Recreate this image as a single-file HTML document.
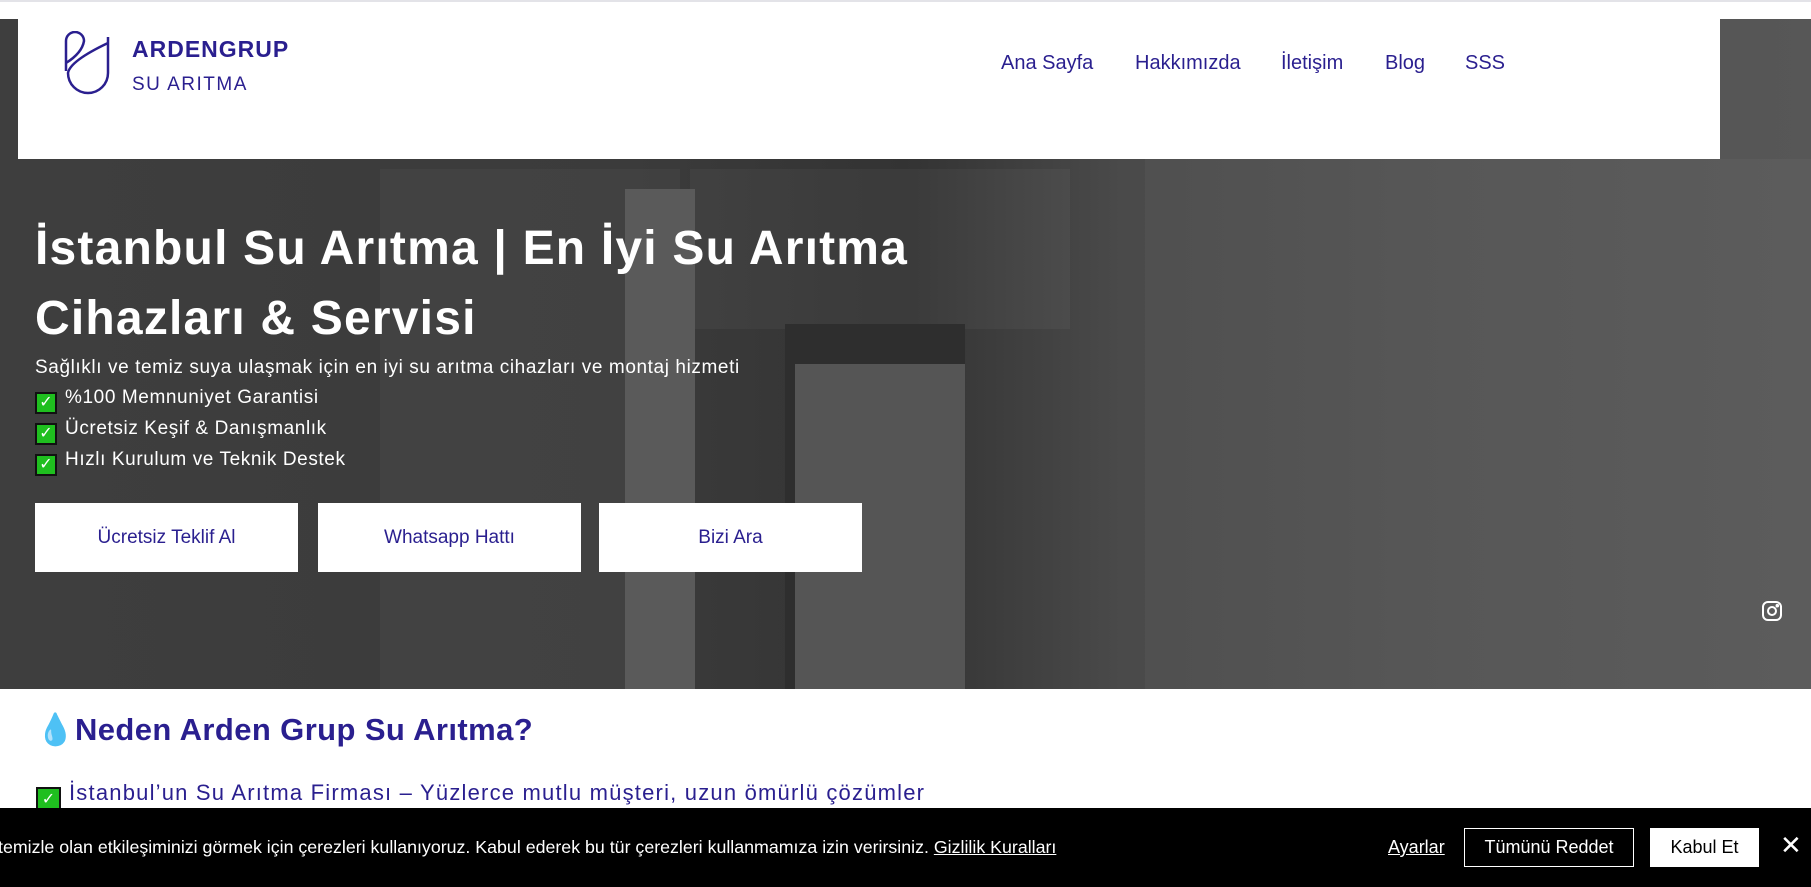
<!DOCTYPE html>
<html><head><meta charset="utf-8"><style>
*{margin:0;padding:0;box-sizing:border-box}
body{width:1811px;height:887px;overflow:hidden;background:#fff;font-family:"Liberation Sans",sans-serif;position:relative}
.top{position:absolute;left:0;top:0;width:1811px;height:2px;background:#e3e3e8}
.hero{position:absolute;left:0;top:19px;width:1811px;height:670px;background:linear-gradient(90deg,#3e3e3e 0%,#3b3b3b 35%,#333 50%,#4a4a4a 62%,#525252 80%,#575757 100%);overflow:hidden}
.blk{position:absolute}
.header{position:absolute;left:18px;top:19px;width:1702px;height:140px;background:#fff}
.nav a{position:absolute;font-size:20px;color:#2a1f8f;text-decoration:none}
.brand{position:absolute;font-size:23px;font-weight:bold;color:#2a1f8f;letter-spacing:1px}
.brand2{position:absolute;font-size:19px;color:#2a1f8f;letter-spacing:1.5px}
h1{position:absolute;left:35px;top:214px;font-size:48px;line-height:70px;color:#fff;font-weight:bold;width:1000px;letter-spacing:1.2px}
.sub{position:absolute;left:35px;top:353px;font-size:19px;color:#fff;line-height:30px;letter-spacing:.6px}
.ck{display:inline-block;width:22px;height:22px;background:#1fbf1f;border:2px solid #111;color:#fff;font-size:16px;line-height:18px;text-align:center;vertical-align:-4px;margin-right:8px;letter-spacing:0}
.btn{position:absolute;top:503px;width:263px;height:69px;background:#fff;color:#2a1f8f;font-size:19px;text-align:center;line-height:69px}
h2{position:absolute;left:36px;top:711px;font-size:31px;color:#2a1f8f;font-weight:bold;letter-spacing:.4px}
.li{position:absolute;left:36px;top:780px;font-size:22px;color:#2a1f8f;letter-spacing:1.2px}
.cookie{position:absolute;left:0;top:808px;width:1811px;height:79px;background:#000;color:#fff;font-size:18px}
</style></head><body>
<div class="top"></div>
<div class="hero">
 <div class="blk" style="left:380px;top:150px;width:300px;height:520px;background:rgba(255,255,255,.03)"></div>
 <div class="blk" style="left:690px;top:150px;width:380px;height:160px;background:rgba(255,255,255,.04)"></div>
 <div class="blk" style="left:785px;top:305px;width:180px;height:365px;background:#2e2e2e"></div>
 <div class="blk" style="left:795px;top:345px;width:170px;height:330px;background:#555"></div>
 <div class="blk" style="left:625px;top:170px;width:70px;height:500px;background:#5a5a5a"></div>
 <div class="blk" style="left:1145px;top:140px;width:666px;height:530px;background:rgba(255,255,255,.03)"></div>
 <svg style="position:absolute;left:1760px;top:580px" width="24" height="24" viewBox="0 0 24 24" fill="none" stroke="#fff" stroke-width="2"><rect x="3" y="3" width="18" height="18" rx="5"/><circle cx="12" cy="12" r="4"/><circle cx="17.3" cy="6.7" r=".8" fill="#fff"/></svg>
</div>
<div class="header">
 <svg style="position:absolute;left:44px;top:12px" width="52" height="66" viewBox="0 0 52 66" fill="none" stroke="#2a1f8f" stroke-width="2.5"><path d="M4 40 V10 A9 9 0 0 1 22 10 Q20 22 4 32"/><path d="M46 6 V42 A20 20 0 0 1 6 42 Q8 30 46 12"/></svg>
 <div class="brand" style="left:114px;top:17px">ARDENGRUP</div>
 <div class="brand2" style="left:114px;top:55px">SU ARITMA</div>
 <div class="nav"><a style="left:983px;top:33px">Ana Sayfa</a><a style="left:1117px;top:33px">Hakkımızda</a><a style="left:1263px;top:33px">İletişim</a><a style="left:1367px;top:33px">Blog</a><a style="left:1447px;top:33px">SSS</a></div>
</div>
<h1>İstanbul Su Arıtma | En İyi Su Arıtma Cihazları &amp; Servisi</h1>
<div class="sub">Sağlıklı ve temiz suya ulaşmak için en iyi su arıtma cihazları ve montaj hizmeti<br><span class="ck">✓</span>%100 Memnuniyet Garantisi<br><span class="ck">✓</span>Ücretsiz Keşif &amp; Danışmanlık<br><span class="ck">✓</span>Hızlı Kurulum ve Teknik Destek</div>
<div class="btn" style="left:35px">Ücretsiz Teklif Al</div>
<div class="btn" style="left:318px">Whatsapp Hattı</div>
<div class="btn" style="left:599px">Bizi Ara</div>
<h2><span style="color:#1ab0ef">💧</span>Neden Arden Grup Su Arıtma?</h2>
<div class="li"><span class="ck" style="width:25px;height:25px;line-height:21px">✓</span>İstanbul’un Su Arıtma Firması – Yüzlerce mutlu müşteri, uzun ömürlü çözümler</div>
<div class="cookie">
 <div style="position:absolute;left:-2px;top:29px;white-space:nowrap;font-size:17.8px">temizle olan etkileşiminizi görmek için çerezleri kullanıyoruz. Kabul ederek bu tür çerezleri kullanmamıza izin verirsiniz. <u>Gizlilik Kuralları</u></div>
 <div style="position:absolute;left:1388px;top:29px"><u>Ayarlar</u></div>
 <div style="position:absolute;left:1464px;top:20px;width:170px;height:39px;border:1px solid #fff;text-align:center;line-height:37px">Tümünü Reddet</div>
 <div style="position:absolute;left:1650px;top:20px;width:109px;height:39px;background:#fff;color:#000;text-align:center;line-height:39px">Kabul Et</div>
 <div style="position:absolute;left:1780px;top:22px;font-size:26px">✕</div>
</div>
</body></html>
